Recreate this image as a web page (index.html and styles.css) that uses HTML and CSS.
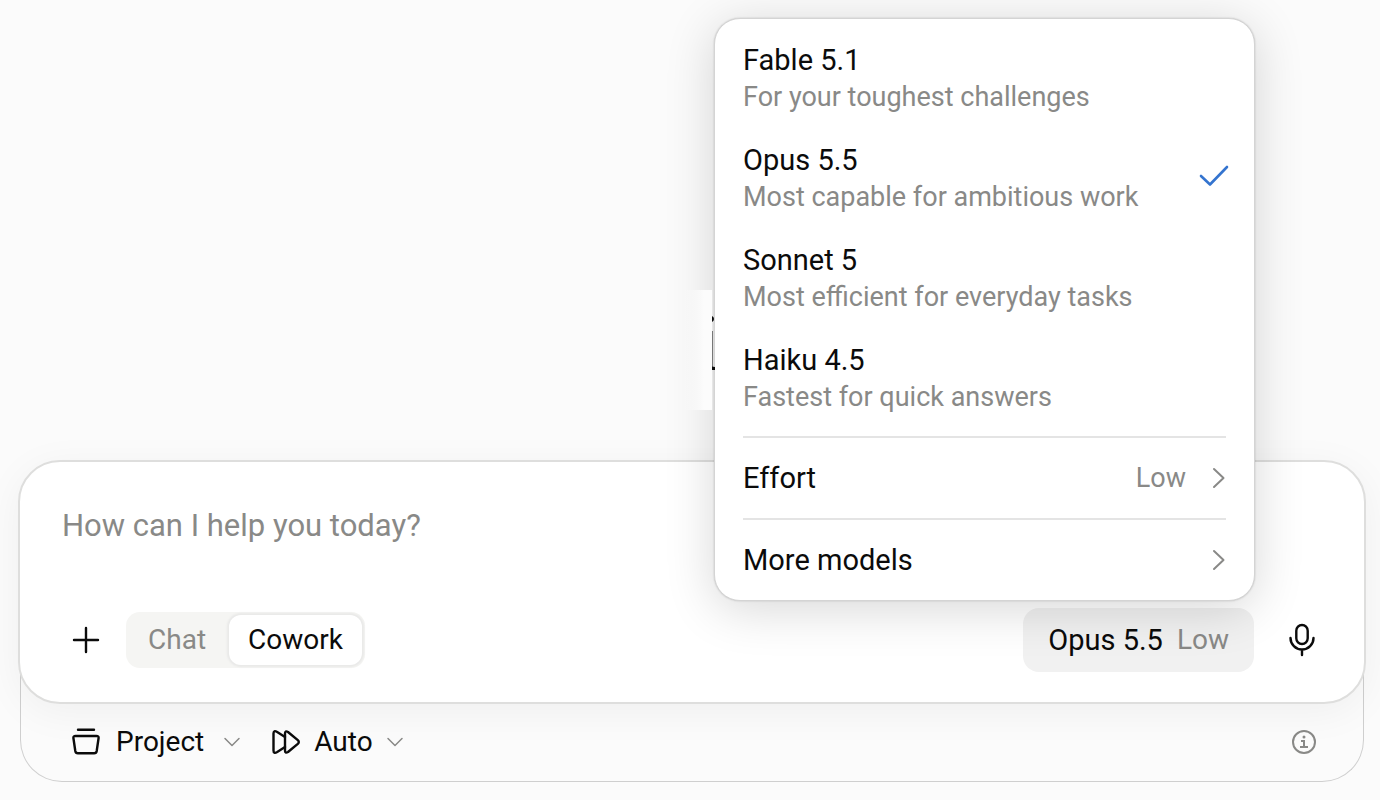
FILE: index.html
```html
<!DOCTYPE html>
<html lang="en">
<head>
    <meta charset="UTF-8">
    <meta name="viewport" content="width=device-width, initial-scale=1.0">
    <title>Cowork</title>
    <link rel="stylesheet" href="styles.css">
</head>
<body>

    <main class="page">
        <form class="composer">

            <div class="composer-card">
                <input class="prompt" type="text" aria-label="Message" placeholder="How can I help you today?">

                <div class="toolbar">
                    <button class="icon-button" type="button" aria-label="Add">
                        <svg width="28" height="28" viewBox="0 0 28 28" fill="none" stroke="currentColor" stroke-width="2.4" stroke-linecap="round">
                            <path d="M14 2v24M2 14h24"/>
                        </svg>
                    </button>

                    <div class="mode-switch">
                        <button class="mode" type="button">Chat</button>
                        <button class="mode active" type="button">Cowork</button>
                    </div>

                    <div class="model-picker">
                        <button class="model-button" type="button">Opus 5.5 <span class="muted level">Low</span></button>

                        <!-- Model menu -->
                        <div class="menu">
                            <!-- Edge of the heading behind the menu -->
                            <div class="backdrop">
                                <svg class="heading-edge" width="3" height="120" viewBox="0 0 3 120">
                                    <path d="M0 26q2 1 2 3t-2 3zM0 76q1 1 3 1v3H0z" fill="#0b0b0b"/>
                                    <path d="M0 41h1v35H0z" fill="#777"/>
                                </svg>
                            </div>

                            <button class="model" type="button">
                                <span class="model-text">
                                    <span class="model-name">Fable 5.1</span>
                                    <span class="muted">For your toughest challenges</span>
                                </span>
                            </button>
                            <button class="model" type="button">
                                <span class="model-text">
                                    <span class="model-name">Opus 5.5</span>
                                    <span class="muted">Most capable for ambitious work</span>
                                </span>
                                <svg class="check" width="26" height="26" viewBox="0 0 26 26" fill="none" stroke="currentColor" stroke-width="2.6" stroke-linecap="round" stroke-linejoin="round">
                                    <path d="M1 10l9 8.500L27 1"/>
                                </svg>
                            </button>
                            <button class="model" type="button">
                                <span class="model-text">
                                    <span class="model-name">Sonnet 5</span>
                                    <span class="muted">Most efficient for everyday tasks</span>
                                </span>
                            </button>
                            <button class="model" type="button">
                                <span class="model-text">
                                    <span class="model-name">Haiku 4.5</span>
                                    <span class="muted">Fastest for quick answers</span>
                                </span>
                            </button>

                            <hr class="divider">

                            <button class="menu-row" type="button">
                                <span>Effort</span>
                                <span class="muted value">Low</span>
                                <svg class="muted" width="16" height="24" viewBox="0 0 16 24" fill="none" stroke="currentColor" stroke-width="2" stroke-linecap="round" stroke-linejoin="round">
                                    <path d="M4 3l9.500 9L4 21"/>
                                </svg>
                            </button>

                            <hr class="divider">

                            <button class="menu-row" type="button">
                                <span>More models</span>
                                <svg class="muted" width="16" height="24" viewBox="0 0 16 24" fill="none" stroke="currentColor" stroke-width="2" stroke-linecap="round" stroke-linejoin="round">
                                    <path d="M4 3l9.500 9L4 21"/>
                                </svg>
                            </button>
                        </div>
                    </div>

                    <button class="icon-button" type="button" aria-label="Dictate">
                        <svg width="28" height="36" viewBox="0 0 28 36" fill="none" stroke="currentColor" stroke-width="2.4" stroke-linecap="round">
                            <rect x="8.3" y="3" width="11.4" height="19" rx="5.7"/>
                            <path d="M2.500 16a11.500 11.500 0 0 0 23 0M14 27.500V33"/>
                        </svg>
                    </button>
                </div>
            </div>

            <div class="footer">
                <button class="footer-button project" type="button">
                    <svg width="28" height="28" viewBox="0 0 28 28" fill="none" stroke="currentColor" stroke-width="2.4" stroke-linecap="round" stroke-linejoin="round">
                        <path d="M6 1.8h16M3.5 8h21q2.4 0 2.1 2l-1.9 13q-.4 2.2-2.6 2.2H5.9q-2.2 0-2.6-2.2L1.4 10q-.3-2 2.1-2z"/>
                    </svg>
                    <span>Project</span>
                    <svg class="chevron" width="16" height="12" viewBox="0 0 16 12" fill="none" stroke="currentColor" stroke-width="1.5" stroke-linecap="round" stroke-linejoin="round">
                        <path d="M1 2.5l7 7 7-7"/>
                    </svg>
                </button>
                <button class="footer-button" type="button">
                    <svg width="28" height="28" viewBox="0 0 28 28" fill="none" stroke="currentColor" stroke-width="2.4" stroke-linecap="round" stroke-linejoin="round">
                        <path d="M13 9L5.2 4Q1.500 1.800 1.500 5.500v17q0 3.700 3.700 1.500L13 19"/>
                        <path d="M13 5.5v17q0 3.300 3 1.500l9.800-8.200q2-1.800 0-3.600L16 4Q13 2.200 13 5.500z"/>
                    </svg>
                    <span>Auto</span>
                    <svg class="chevron" width="16" height="12" viewBox="0 0 16 12" fill="none" stroke="currentColor" stroke-width="1.5" stroke-linecap="round" stroke-linejoin="round">
                        <path d="M1 2.5l7 7 7-7"/>
                    </svg>
                </button>
                <button class="icon-button info" type="button" aria-label="Info">
                    <svg width="26" height="26" viewBox="0 0 26 26" fill="none" stroke="currentColor" stroke-width="2">
                        <circle cx="13" cy="13" r="11"/>
                        <path d="M10 12h3v6M9 18h8"/>
                        <circle cx="13" cy="8" r="1.5" fill="currentColor" stroke="none"/>
                    </svg>
                </button>
            </div>

        </form>
    </main>

</body>
</html>
```
FILE: styles.css
```css
* {
    box-sizing: border-box;
}

body {
    margin: 0;
    background-color: #fbfbfb;
    color: #0b0b0b;
    font-family: Roboto, sans-serif;
    font-size: 28px;
    line-height: 36px;
}

button,
input {
    margin: 0;
    padding: 0;
    border: none;
    background: none;
    color: inherit;
    font: inherit;
}

button {
    cursor: pointer;
}

svg {
    display: block;
    flex: none;
    overflow: visible;
}

.muted {
    color: #898987;
}

.page {
    display: flex;
    flex-direction: column;
    justify-content: flex-end;
    min-height: 100vh;
    padding: 0 14px 18px 18px;
}

.composer-card {
    position: relative;
    z-index: 1;
    padding: 42px 42px 30px;
    border: 2px solid #dededd;
    border-radius: 42px;
    background-color: #fff;
    box-shadow: 0 8px 40px rgba(0, 0, 0, 0.05);
}

.prompt {
    display: block;
    width: 100%;
    height: 42px;
    margin-bottom: 62px;
    font-size: 31px;
    outline: none;
}

.prompt::placeholder {
    color: #898987;
    opacity: 1;
}

.toolbar {
    display: flex;
    align-items: center;
    height: 64px;
    padding: 0 6px 0 10px;
}

.mode-switch {
    display: flex;
    gap: 4px;
    margin-left: 26px;
    padding: 3px;
    border-radius: 14px;
    background-color: #f5f5f3;
}

.mode {
    height: 50px;
    padding: 0 19px;
    border-radius: 12px;
    color: #898987;
}

.mode.active {
    background-color: #fff;
    color: #0b0b0b;
    box-shadow: 0 0 2px 2px #e9e9e8;
}

.model-picker {
    position: relative;
    margin-left: auto;
    margin-right: 34px;
}

.model-button {
    display: flex;
    gap: 14px;
    align-items: center;
    height: 64px;
    padding: 0 25px;
    border-radius: 16px;
    background-color: #f1f1f1;
    font-size: 29px;
}

.level {
    font-size: 28px;
}

/* Model menu */
.menu {
    position: absolute;
    right: -1px;
    bottom: calc(100% + 7px);
    z-index: 2;
    width: 541px;
    padding: 23px 28px 0;
    border: 1px solid #d4d4d4;
    border-radius: 26px;
    background-color: #fff;
    box-shadow: 0 0 2px rgba(0, 0, 0, 0.2), 0 8px 50px rgba(0, 0, 0, 0.16);
    font-size: 29px;
}

.backdrop {
    position: absolute;
    top: 271px;
    right: calc(100% + 3px);
    width: 28px;
    height: 120px;
    background: linear-gradient(to right, transparent, #fcfcfc 20px);
}

.heading-edge {
    position: absolute;
    left: 100%;
    top: 0;
}

.model {
    display: flex;
    align-items: center;
    justify-content: space-between;
    width: 100%;
    height: 74px;
    margin-bottom: 26px;
    line-height: 37px;
    text-align: left;
}

.model:has(+ .divider) {
    margin-bottom: 20px;
}

.model-name,
.model-text .muted {
    display: block;
}

.model-text .muted {
    font-size: 27px;
}

.check {
    color: #3474cf;
}

.divider {
    height: 2px;
    margin: 0;
    border: none;
    background-color: #e4e4e4;
}

.menu-row {
    display: flex;
    align-items: center;
    justify-content: space-between;
    width: 100%;
    height: 80px;
}

.value {
    margin-left: auto;
    margin-right: 24px;
    font-size: 27px;
}

/* Bottom bar */
.footer {
    display: flex;
    align-items: center;
    gap: 32px;
    margin: -42px 2px 0;
    padding: 62px 46px 21px 51px;
    border: 1px solid #cfcfcf;
    border-top: none;
    border-radius: 0 0 42px 42px;
}

.footer-button {
    display: flex;
    align-items: center;
    gap: 14px;
}

.project {
    gap: 16px;
}

.project .chevron {
    margin-left: 4px;
}

.chevron {
    color: #898987;
}

.info {
    margin-left: auto;
    color: #898987;
}
```
